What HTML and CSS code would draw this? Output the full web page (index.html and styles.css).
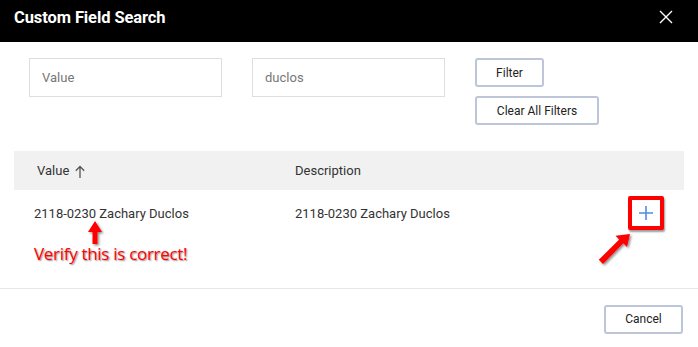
FILE: index.html
```html
<!DOCTYPE html>
<html>
<head>
<meta charset="utf-8">
<link rel="stylesheet" href="styles.css">
</head>
<body>
<div class="modal">
  <div class="header">
    <div class="title">Custom Field Search</div>
    <svg class="close" width="14" height="14" viewBox="0 0 14 14"><path d="M1 1L13 13M13 1L1 13" stroke="#fff" stroke-width="1.4" fill="none"/></svg>
  </div>
  <div class="filters">
    <div class="input">Value</div>
    <div class="input">duclos</div>
    <div class="buttons">
      <button class="btn btn-filter">Filter</button>
      <button class="btn btn-clear">Clear All Filters</button>
    </div>
  </div>
  <div class="table">
    <div class="thead">
      <div class="th th-value">Value <svg class="sort" width="10" height="13" viewBox="0 0 10 13"><path d="M5 1.5V13M0.8 5.7L5 1.5L9.2 5.7" stroke="#555" stroke-width="1.3" fill="none"/></svg></div>
      <div class="th th-desc">Description</div>
    </div>
    <div class="trow">
      <div class="td td-value">2118-0230 Zachary Duclos</div>
      <div class="td td-desc">2118-0230 Zachary Duclos</div>
      <div class="td td-action">
        <div class="plus-box">
          <svg width="16" height="16" viewBox="0 0 16 16"><path d="M8 1V15M1 8H15" stroke="#4a8fe6" stroke-width="1.6" fill="none"/></svg>
        </div>
      </div>
    </div>
  </div>
  <div class="annotation-text">Verify this is correct!</div>
  <svg class="annot-arrows" width="698" height="347" viewBox="0 0 698 347">
    <defs>
      <filter id="sh" x="-50%" y="-50%" width="200%" height="200%">
        <feDropShadow dx="1.5" dy="1.5" stdDeviation="1" flood-color="#000" flood-opacity="0.45"/>
      </filter>
    </defs>
    <g filter="url(#sh)" fill="#ff0000">
      <polygon points="95,221 102,232 97.5,232 97.5,244 92.5,244 92.5,232 88,232"/>
      <polygon points="630,234 627,247 623.3,243.3 603,264 598.8,259.8 619.2,239.4 615.5,235.7"/>
    </g>
  </svg>
  <div class="footer">
    <button class="btn btn-cancel">Cancel</button>
  </div>
</div>
</body>
</html>
```
FILE: styles.css
```css
* { box-sizing: border-box; }
html, body { margin: 0; padding: 0; background: #fff; }
body { font-family: Roboto, "Liberation Sans", sans-serif; color: #333; }
.modal { position: relative; width: 698px; height: 347px; overflow: hidden; }
.header {
  height: 42px; background: #000; display: flex; align-items: center;
  justify-content: space-between; padding: 0 25px 0 14px;
}
.title { color: #fff; font-weight: 700; font-size: 16.5px; letter-spacing: -0.1px; margin-top: -7px; }
.close { margin-top: -8px; }
.filters { display: flex; align-items: flex-start; gap: 30px; padding: 16px 0 0 29px; }
.input {
  width: 193px; height: 39px; border: 1px solid #dedede; color: #777;
  font-size: 13px; display: flex; align-items: center; padding-left: 12px;
}
.buttons { display: flex; flex-direction: column; align-items: flex-start; gap: 9px; }
.btn {
  height: 29px; background: #fff; border: 2px solid #bcc6d8; border-radius: 3px;
  font-family: Roboto, "Liberation Sans", sans-serif; font-size: 12px; color: #222;
  padding: 0; cursor: pointer;
}
.btn-filter { width: 69px; }
.btn-clear { width: 124px; }
.btn-cancel { width: 79px; }
.table { margin: 26px 14px 0 14px; }
.thead { height: 39px; background: #f1f1f1; display: flex; align-items: center; font-size: 13px; color: #333; }
.th-value { width: 281px; padding-left: 23px; display: flex; align-items: center; gap: 6px; }
.sort { margin-top: 1px; }
.trow { height: 46px; display: flex; align-items: center; font-size: 13px; color: #333; }
.td-value { width: 281px; padding-left: 20px; }
.td-desc { flex: 1; }
.td-action { width: 56px; display: flex; justify-content: flex-start; }
.plus-box {
  width: 36px; height: 34px; border: 4px solid #ff0000; border-radius: 2px; background: #fff;
  display: flex; align-items: center; justify-content: center;
  box-shadow: 1px 2px 2px rgba(0,0,0,0.4); margin-top: -1px;
}
.annotation-text {
  position: absolute; left: 34px; top: 245px; color: #ff0000; line-height: 17px;
  font-family: "Open Sans", sans-serif; font-size: 17px; letter-spacing: -0.3px;
  text-shadow: 1px 1px 1.5px rgba(0,0,0,0.45);
}
.annot-arrows { position: absolute; left: 0; top: 0; pointer-events: none; }
.footer {
  position: absolute; left: 0; right: 0; bottom: 0; height: 59px;
  border-top: 1px solid #e6e6e6; display: flex; justify-content: flex-end; align-items: center;
  padding: 2px 15px 0 0;
}
```
